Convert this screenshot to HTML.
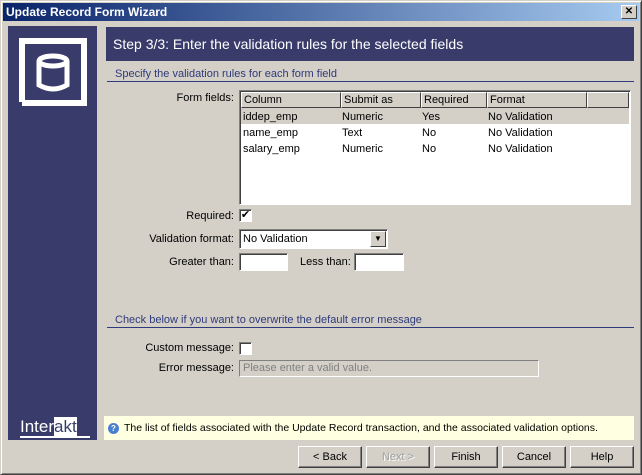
<!DOCTYPE html>
<html><head><style>
*{margin:0;padding:0;box-sizing:border-box}
body{width:642px;height:475px;background:#d4d0c8;font-family:"Liberation Sans",Tahoma,sans-serif;font-size:11px;color:#000;position:relative;overflow:hidden}
.a{position:absolute}
.win{left:0;top:0;width:642px;height:475px;border:1px solid;border-color:#d4d0c8 #404040 #404040 #d4d0c8;box-shadow:inset 1px 1px #fff,inset -1px -1px #808080}
.title{left:3px;top:3px;width:636px;height:18px;background:linear-gradient(90deg,#0a246a,#a6caf0);color:#fff;font-weight:bold;font-size:12px;line-height:18px;padding-left:3px}
.xb{right:5px;top:5px;width:16px;height:14px;background:#d4d0c8;border:1px solid;border-color:#fff #404040 #404040 #fff;font-size:10px;line-height:11px;text-align:center;font-weight:bold}
.lbl{text-align:right;width:120px}
.inp{background:#fff;border:1px solid;border-color:#808080 #fff #fff #808080;box-shadow:inset 1px 1px #404040}
.btn{top:446px;height:22px;width:64px;border:1px solid;border-color:#fff #404040 #404040 #fff;box-shadow:inset -1px -1px #808080;text-align:center;line-height:20px}
.hd{border:1px solid;border-color:#fff #404040 #404040 #fff;height:16px;line-height:14px;padding-left:2px;top:0}
.sec{color:#2e3a7a}
</style></head><body>
<div class="a win"></div>
<div class="a title">Update Record Form Wizard</div>
<div class="a xb">✕</div>
<div class="a" style="left:8px;top:26px;width:89px;height:414px;background:#393c6b"></div>
<svg class="a" style="left:8px;top:26px" width="89" height="110">
<path d="M14 76 V15 H76 V77 H14" fill="none" stroke="#fff" stroke-width="6"/>
<ellipse cx="45" cy="35" rx="14" ry="5" fill="none" stroke="#fff" stroke-width="5"/>
<path d="M31 35 V59 Q45 67 59 59 V35" fill="none" stroke="#fff" stroke-width="5"/>
</svg>
<div class="a" style="left:20px;top:416px;width:70px;height:22px;color:#fff;font-size:17px;line-height:22px;border-bottom:2px solid #fff">Inter<span style="background:#fff;color:#393c6b">akt</span></div>
<div class="a" style="left:106px;top:27px;width:528px;height:34px;background:#393c6b;color:#fff;font-size:14px;line-height:34px;padding-left:7px">Step 3/3: Enter the validation rules for the selected fields</div>
<div class="a sec" style="left:115px;top:68px">Specify the validation rules for each form field</div>
<div class="a" style="left:107px;top:81px;width:527px;height:1px;background:#2e3a7a"></div>
<div class="a lbl" style="left:114px;top:92px">Form fields:</div>
<div class="a inp" style="left:239px;top:90px;width:392px;height:115px;background:#fff">
<div class="a" style="left:1px;top:1px;width:388px;height:16px;background:#d4d0c8">
<div class="a hd" style="left:0;width:100px">Column</div>
<div class="a hd" style="left:100px;width:80px">Submit as</div>
<div class="a hd" style="left:180px;width:66px">Required</div>
<div class="a hd" style="left:246px;width:100px">Format</div>
<div class="a hd" style="left:346px;width:42px"></div></div>
<div class="a" style="left:1px;top:17px;width:388px;height:16px;background:#d4d0c8"></div>
<div class="a" style="left:3px;top:18px;line-height:16px">iddep_emp<br>name_emp<br>salary_emp</div>
<div class="a" style="left:102px;top:18px;line-height:16px">Numeric<br>Text<br>Numeric</div>
<div class="a" style="left:182px;top:18px;line-height:16px">Yes<br>No<br>No</div>
<div class="a" style="left:248px;top:18px;line-height:16px">No Validation<br>No Validation<br>No Validation</div>
</div>
<div class="a lbl" style="left:114px;top:210px">Required:</div>
<div class="a inp" style="left:239px;top:209px;width:13px;height:13px;font-size:11px;line-height:11px;text-align:center">✔</div>
<div class="a lbl" style="left:114px;top:233px">Validation format:</div>
<div class="a inp" style="left:239px;top:229px;width:149px;height:20px;line-height:18px;padding-left:3px">No Validation
<div class="a" style="right:1px;top:1px;width:16px;height:16px;background:#d4d0c8;border:1px solid;border-color:#fff #404040 #404040 #fff;font-size:8px;line-height:14px;text-align:center">▼</div></div>
<div class="a lbl" style="left:114px;top:256px">Greater than:</div>
<div class="a inp" style="left:239px;top:253px;width:49px;height:18px"></div>
<div class="a" style="left:300px;top:256px">Less than:</div>
<div class="a inp" style="left:354px;top:253px;width:50px;height:18px"></div>
<div class="a sec" style="left:115px;top:314px">Check below if you want to overwrite the default error message</div>
<div class="a" style="left:107px;top:327px;width:527px;height:1px;background:#2e3a7a"></div>
<div class="a lbl" style="left:114px;top:342px">Custom message:</div>
<div class="a inp" style="left:239px;top:342px;width:13px;height:13px"></div>
<div class="a lbl" style="left:114px;top:362px">Error message:</div>
<div class="a" style="left:239px;top:360px;width:300px;height:17px;border:1px solid;border-color:#808080 #fff #fff #808080;color:#808080;line-height:15px;padding-left:3px">Please enter a valid value.</div>
<div class="a" style="left:104px;top:416px;width:530px;height:24px;background:#ffffe1;line-height:24px;padding-left:20px;font-size:10.5px">The list of fields associated with the Update Record transaction, and the associated validation options.</div>
<div class="a" style="left:108px;top:423px;width:11px;height:11px;border-radius:50%;background:#4a7fd0;color:#fff;font-size:8px;line-height:11px;text-align:center;font-weight:bold">?</div>
<div class="a btn" style="left:298px">&lt; Back</div>
<div class="a btn" style="left:366px;color:#a0a0a0;text-shadow:1px 1px #fff">Next &gt;</div>
<div class="a btn" style="left:434px">Finish</div>
<div class="a btn" style="left:502px">Cancel</div>
<div class="a btn" style="left:570px">Help</div>
</body></html>
